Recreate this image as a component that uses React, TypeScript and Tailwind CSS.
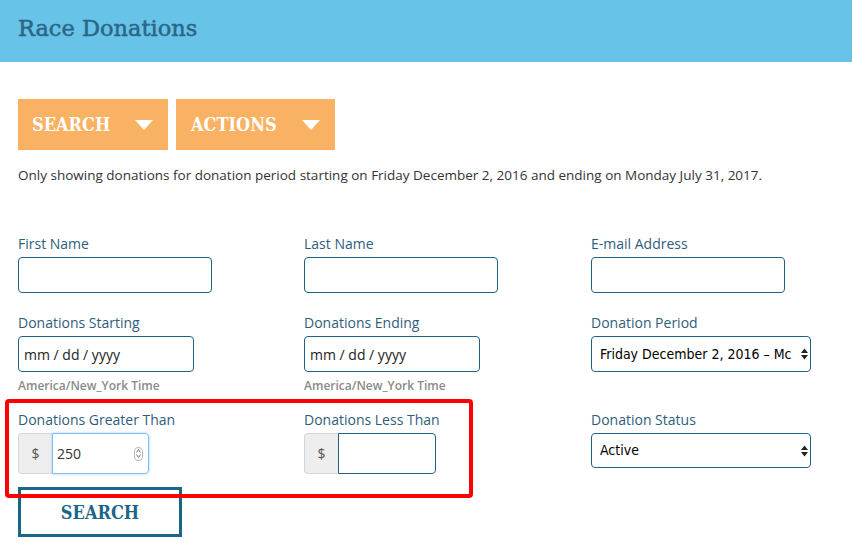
import React from 'react';

const slab = { fontFamily: '"DejaVu Serif Condensed", "DejaVu Serif", "Liberation Serif", serif' };

const Label: React.FC<{ children: React.ReactNode }> = ({ children }) => (
  <label className="block text-[14px] leading-[20px] text-[#2f5d7c] mb-[3px]">{children}</label>
);

const Caret: React.FC = () => (
  <svg width="18" height="10" viewBox="0 0 18 10" className="ml-auto">
    <path d="M0 0 L18 0 L9 10 Z" fill="white" />
  </svg>
);

const Arrows: React.FC = () => (
  <svg width="7" height="12" viewBox="0 0 7 12" className="absolute right-[2px] top-1/2 -translate-y-1/2">
    <path d="M0 5 L3.5 0.5 L7 5 Z M0 7 L3.5 11.5 L7 7 Z" fill="#222" />
  </svg>
);

const selectFont = { fontFamily: '"DejaVu Sans Condensed", "DejaVu Sans", sans-serif' };

const App: React.FC = () => {
  return (
    <div className="relative w-[852px] h-[555px] bg-white overflow-hidden" style={{ fontFamily: '"Open Sans", "Liberation Sans", sans-serif' }}>
      <div className="h-[62px] bg-[#68c3e9] flex items-center px-[18px]">
        <h1 className="text-[22.5px] font-normal text-[#2a6787] -mt-[4px] [-webkit-text-stroke:0.5px_#2a6787]" style={{ fontFamily: '"DejaVu Serif", "Liberation Serif", serif' }}>Race Donations</h1>
      </div>

      <div className="px-[18px]">
        <div className="flex gap-[8px] mt-[37px]">
          <button className="w-[150px] h-[51px] bg-[#f9b163] flex items-center pl-[14px] pr-[15px] text-white text-[18px] font-bold" style={slab}>
            SEARCH
            <Caret />
          </button>
          <button className="w-[159px] h-[51px] bg-[#f9b163] flex items-center pl-[15px] pr-[15px] text-white text-[18px] font-bold" style={slab}>
            ACTIONS
            <Caret />
          </button>
        </div>

        <p className="mt-[15px] text-[13.5px] leading-[20px] text-[#333]">
          Only showing donations for donation period starting on Friday December 2, 2016 and ending on Monday July 31, 2017.
        </p>

        <div className="grid grid-cols-[286px_287px_1fr] mt-[49px]">
          <div>
            <Label>First Name</Label>
            <div className="w-[194px] h-[36px] border border-[#1f6384] rounded-[4px]" />
          </div>
          <div>
            <Label>Last Name</Label>
            <div className="w-[194px] h-[36px] border border-[#1f6384] rounded-[4px]" />
          </div>
          <div>
            <Label>E-mail Address</Label>
            <div className="w-[194px] h-[36px] border border-[#1f6384] rounded-[4px]" />
          </div>
        </div>

        <div className="grid grid-cols-[286px_287px_1fr] mt-[20px]">
          <div>
            <Label>Donations Starting</Label>
            <div className="w-[176px] h-[36px] border border-[#1f6384] rounded-[4px] flex items-center px-[5px] text-[14px] text-[#222]">mm / dd / yyyy</div>
            <div className="mt-[5px] text-[12px] font-semibold text-[#8a8a8a]">America/New_York Time</div>
          </div>
          <div>
            <Label>Donations Ending</Label>
            <div className="w-[176px] h-[36px] border border-[#1f6384] rounded-[4px] flex items-center px-[5px] text-[14px] text-[#222]">mm / dd / yyyy</div>
            <div className="mt-[5px] text-[12px] font-semibold text-[#8a8a8a]">America/New_York Time</div>
          </div>
          <div>
            <Label>Donation Period</Label>
            <div className="relative w-[220px] h-[36px] border border-[#1f6384] rounded-[4px] flex items-center pl-[8px] text-[14px] text-black whitespace-nowrap" style={selectFont}>
              <span className="w-[198px] overflow-hidden">Friday December 2, 2016 – Mc</span>
              <Arrows />
            </div>
          </div>
        </div>

        <div className="grid grid-cols-[286px_287px_1fr] mt-[15px]">
          <div>
            <Label>Donations Greater Than</Label>
            <div className="flex w-[131px] h-[41px]">
              <div className="w-[34px] bg-[#eeeeee] border border-[#d6d6d6] border-r-0 rounded-l-[4px] flex items-center justify-center text-[14px] text-[#555]">$</div>
              <div className="relative flex-1 border border-[#7fbff7] rounded-r-[4px] shadow-[0_0_3px_#9cd0ff] flex items-center pl-[4px] text-[14px] text-[#333]">
                250
                <div className="absolute right-[5px] top-1/2 -translate-y-1/2 w-[9px] h-[14px] border border-[#bbb] rounded-[4px] flex flex-col items-center justify-center gap-[1px]">
                  <svg width="5" height="4" viewBox="0 0 5 4"><path d="M0.5 3.5 L2.5 0.5 L4.5 3.5" stroke="#666" fill="none" strokeWidth="0.9" /></svg>
                  <svg width="5" height="4" viewBox="0 0 5 4"><path d="M0.5 0.5 L2.5 3.5 L4.5 0.5" stroke="#666" fill="none" strokeWidth="0.9" /></svg>
                </div>
              </div>
            </div>
          </div>
          <div>
            <Label>Donations Less Than</Label>
            <div className="flex w-[132px] h-[41px]">
              <div className="w-[34px] bg-[#eeeeee] border border-[#d6d6d6] border-r-0 rounded-l-[4px] flex items-center justify-center text-[14px] text-[#555]">$</div>
              <div className="flex-1 border border-[#1f6384] rounded-r-[4px]" />
            </div>
          </div>
          <div>
            <Label>Donation Status</Label>
            <div className="relative w-[220px] h-[35px] border border-[#1f6384] rounded-[4px] flex items-center pl-[8px] text-[14px] text-black" style={selectFont}>
              Active
              <Arrows />
            </div>
          </div>
        </div>

        <button className="mt-[13px] w-[164px] h-[50px] border-[3px] border-[#1a6687] text-[#1a6687] text-[18px] font-bold flex items-center justify-center" style={slab}>
          SEARCH
        </button>
      </div>

      <div className="absolute left-[5px] top-[399px] w-[468px] h-[99px] border-[4px] border-[#ff0000] rounded-[4px] pointer-events-none" />
    </div>
  );
};

export default App;
